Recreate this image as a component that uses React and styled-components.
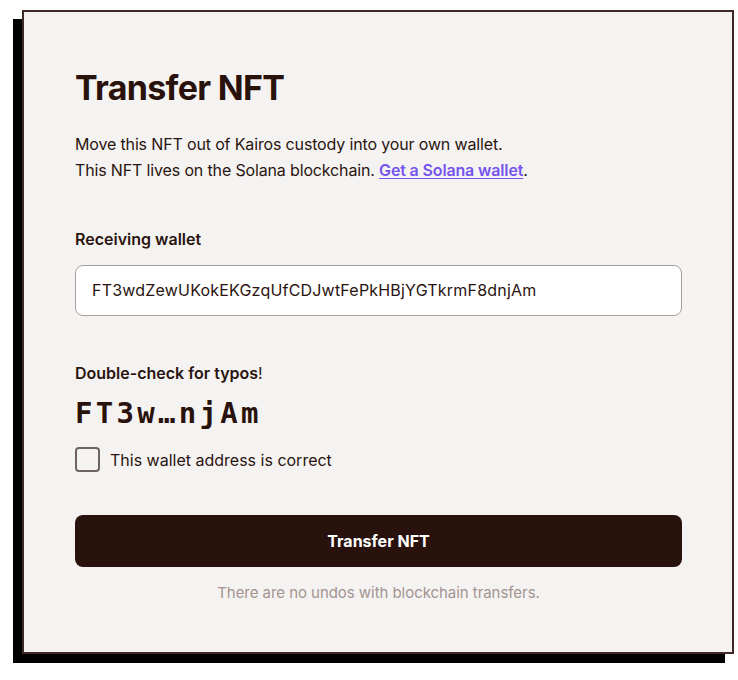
import React, { useState } from "react";
import styled, { createGlobalStyle } from "styled-components";

const Global = createGlobalStyle`
  html, body { margin: 0; padding: 0; background: #ffffff; }
  body { font-family: Inter, "Noto Sans", sans-serif; color: #2a140f; }
  * { box-sizing: border-box; }
`;

const Page = styled.div`
  padding: 10px 0 26px 22px;
`;

const Card = styled.section`
  width: 712px;
  height: 644px;
  background: #f5f3f2;
  border: 2px solid #3d2a26;
  box-shadow: -9px 9px 0 #000;
  padding: 55px 50px 0 51px;
  display: flex;
  flex-direction: column;
`;

const Title = styled.h1`
  margin: 0;
  font-size: 34px;
  line-height: 41px;
  font-weight: 700;
  letter-spacing: -0.7px;
  color: #2a120c;
`;

const Intro = styled.p`
  margin: 24px 0 0;
  font-size: 16px;
  line-height: 25.6px;
  letter-spacing: -0.15px;
  color: #2a140f;
`;

const Link = styled.a`
  color: #7554ee;
  font-weight: 600;
  text-decoration: underline;
  text-underline-offset: 2px;
`;

const Label = styled.label`
  display: block;
  font-size: 16px;
  line-height: 25.6px;
  font-weight: 600;
  margin-top: ${(p) => p.$top}px;
  color: #2a140f;
`;

const Plain = styled.span`
  font-weight: 400;
`;

const Input = styled.input`
  margin-top: 12px;
  width: 100%;
  height: 51px;
  border: 1px solid #a89e9a;
  border-radius: 8px;
  background: #ffffff;
  padding: 0 16px;
  font-family: Inter, "Noto Sans", sans-serif;
  font-size: 16px;
  letter-spacing: 0.2px;
  color: #2a140f;
  outline: none;
`;

const Short = styled.div`
  margin-top: 9px;
  font-family: "DejaVu Sans Mono", "Liberation Mono", monospace;
  font-weight: 700;
  font-size: 29px;
  line-height: 36px;
  letter-spacing: 3.3px;
  color: #2a120c;
`;

const CheckRow = styled.label`
  margin-top: 16px;
  display: flex;
  align-items: center;
  gap: 10px;
  font-size: 16px;
  line-height: 25px;
  cursor: pointer;
`;

const Box = styled.span`
  width: 25px;
  height: 25px;
  border: 2px solid #6e6360;
  border-radius: 4px;
  background: ${(p) => (p.$on ? "#2a120c" : "transparent")};
  flex: none;
`;

const Text = styled.span`
  position: relative;
  top: 1px;
`;

const Button = styled.button`
  margin-top: 43px;
  width: 100%;
  height: 52px;
  border: none;
  border-radius: 8px;
  background: #2a120c;
  color: #ffffff;
  font-family: Inter, "Noto Sans", sans-serif;
  font-size: 16px;
  font-weight: 700;
  cursor: pointer;
`;

const Note = styled.p`
  margin: 14px 0 0;
  text-align: center;
  font-size: 15px;
  line-height: 24px;
  letter-spacing: -0.05px;
  color: #a3948f;
`;

export default function App() {
  const [on, setOn] = useState(false);
  return (
    <Page>
      <Global />
      <Card>
        <Title>Transfer NFT</Title>
        <Intro>
          Move this NFT out of Kairos custody into your own wallet.
          <br />
          This NFT lives on the Solana blockchain.{" "}
          <Link href="#">Get a Solana wallet</Link>.
        </Intro>
        <Label $top={44}>Receiving wallet</Label>
        <Input
          readOnly
          value="FT3wdZewUKokEKGzqUfCDJwtFePkHBjYGTkrmF8dnjAm"
        />
        <Label $top={45}>
          Double-check for typos<Plain>!</Plain>
        </Label>
        <Short>FT3w…njAm</Short>
        <CheckRow onClick={() => setOn(!on)}>
          <Box $on={on} />
          <Text>This wallet address is correct</Text>
        </CheckRow>
        <Button>Transfer NFT</Button>
        <Note>There are no undos with blockchain transfers.</Note>
      </Card>
    </Page>
  );
}
